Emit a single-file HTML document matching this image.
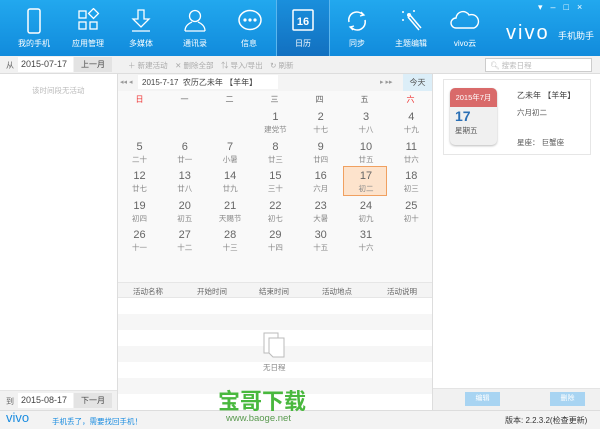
<!DOCTYPE html>
<html><head><meta charset="utf-8"><style>
*{margin:0;padding:0;box-sizing:border-box}
body{width:600px;height:429px;overflow:hidden;background:#fff;font-family:"Liberation Sans","Noto Sans CJK SC",sans-serif;position:relative;color:#555;font-size:8px}
.a{position:absolute}
#hd{left:0;top:0;width:600px;height:56px;background:linear-gradient(#22a8ee,#118bdc)}
.nv{position:absolute;top:0;height:56px;width:54px;text-align:center;color:#fff;font-size:8px}
.nv svg{position:absolute;left:15px;top:8px}
.nv span{position:absolute;left:0;right:0;top:38px}
.tb{background:#f1f1f1}
.cell{position:absolute;width:45px;height:29px;text-align:center;color:#666}
.cell b{display:block;font-weight:normal;font-size:11px;line-height:13px;margin-top:3px;color:#666}
.cell i{display:block;font-style:normal;font-size:7.5px;line-height:11px;color:#888}
.wk{position:absolute;top:94px;width:45px;text-align:center;font-size:8px;color:#666}
</style></head><body>
<div id="hd" class="a">
<div class="a" style="left:276px;top:0;width:54px;height:56px;background:linear-gradient(#1a8fdc,#1270c0);border-left:1px solid #5cb6ee;border-right:1px solid #5cb6ee"></div>
<div class="nv" style="left:7px"><svg width="24" height="26"><rect x="6" y="1" width="12" height="24" rx="2" fill="none" stroke="#fff" stroke-width="1.5"/></svg><span>我的手机</span></div>
<div class="nv" style="left:61px"><svg width="24" height="26"><rect x="3" y="3" width="7" height="7" fill="none" stroke="#fff" stroke-width="1.3"/><rect x="14" y="2" width="7" height="7" transform="rotate(45 17.5 5.5)" fill="none" stroke="#fff" stroke-width="1.3"/><rect x="3" y="14" width="7" height="7" fill="none" stroke="#fff" stroke-width="1.3"/><rect x="14" y="14" width="7" height="7" fill="none" stroke="#fff" stroke-width="1.3"/></svg><span>应用管理</span></div>
<div class="nv" style="left:114px"><svg width="24" height="26"><path d="M9 2h6v9h5l-8 8-8-8h5z" fill="none" stroke="#fff" stroke-width="1.3"/><path d="M3 23h18" stroke="#fff" stroke-width="1.3"/></svg><span>多媒体</span></div>
<div class="nv" style="left:168px"><svg width="24" height="26"><circle cx="12" cy="8" r="5.5" fill="none" stroke="#fff" stroke-width="1.3"/><path d="M2 23c0-6 5-8 7-9M22 23c0-6-5-8-7-9M2 23h20" fill="none" stroke="#fff" stroke-width="1.3"/></svg><span>通讯录</span></div>
<div class="nv" style="left:222px"><svg width="26" height="26"><ellipse cx="13" cy="12" rx="11" ry="9.5" fill="none" stroke="#fff" stroke-width="1.5"/><circle cx="8" cy="12" r="1.6" fill="#fff"/><circle cx="13" cy="12" r="1.6" fill="#fff"/><circle cx="18" cy="12" r="1.6" fill="#fff"/></svg><span>信息</span></div>
<div class="nv" style="left:276px"><svg width="24" height="26"><rect x="2" y="2" width="20" height="20" rx="1" fill="none" stroke="#fff" stroke-width="1.5"/><text x="12" y="17" font-size="11" fill="#fff" text-anchor="middle" font-family="Liberation Sans" font-weight="bold">16</text></svg><span>日历</span></div>
<div class="nv" style="left:330px"><svg width="24" height="26"><path d="M4 14a8 8 0 0 1 14-7M20 12a8 8 0 0 1-14 7" fill="none" stroke="#fff" stroke-width="1.5"/><path d="M16 4l3 3-4 1M8 22l-3-3 4-1" fill="none" stroke="#fff" stroke-width="1.3"/></svg><span>同步</span></div>
<div class="nv" style="left:384px"><svg width="26" height="26"><path d="M9 9l11 13M11 7l11 13" stroke="#fff" stroke-width="1.5"/><circle cx="10" cy="7" r="2" fill="#fff"/><circle cx="4" cy="4" r="1" fill="#fff"/><circle cx="15" cy="3" r="1" fill="#fff"/><circle cx="4" cy="12" r="1" fill="#fff"/></svg><span>主题编辑</span></div>
<div class="nv" style="left:438px"><svg width="30" height="26" style="left:12px"><path d="M6 20a5 5 0 0 1 0-10a7 7 0 0 1 13-3a6 6 0 0 1 5 13z" fill="none" stroke="#fff" stroke-width="1.4"/></svg><span>vivo云</span></div>
<div class="a" style="left:506px;top:22px;color:#fff;font-size:20px;letter-spacing:2px;font-weight:300">vivo</div>
<div class="a" style="left:558px;top:29px;color:#fff;font-size:9px">手机助手</div>
<div class="a" style="left:538px;top:2px;color:#fff;font-size:9px;letter-spacing:8px">▾–□×</div>
</div>
<div class="a tb" style="left:0;top:56px;width:600px;height:18px;border-bottom:1px solid #ddd"></div>
<div class="a" style="left:6px;top:60px;font-size:8px;color:#666">从</div>
<div class="a" style="left:18px;top:57px;width:55px;height:15px;background:#fff;font-size:9px;color:#444;padding:2px 3px">2015-07-17</div>
<div class="a" style="left:74px;top:57px;width:38px;height:15px;background:#e3e3e3;font-size:8px;text-align:center;line-height:15px;color:#444">上一月</div>
<div class="a" style="left:128px;top:60px;font-size:7.5px;color:#aaa">＋ 新建活动　✕ 删除全部　⇅ 导入/导出　↻ 刷新</div>
<div class="a" style="left:485px;top:58px;width:107px;height:14px;background:#fff;border:1px solid #ccc;font-size:7.5px;color:#bbb;padding:1px 4px">🔍︎ 搜索日程</div>
<div class="a" style="left:117px;top:74px;width:1px;height:336px;background:#ddd"></div>
<div class="a" style="left:32px;top:85px;font-size:7.5px;color:#bbb">该时间段无活动</div>
<div class="a tb" style="left:0;top:390px;width:117px;height:20px;border-top:1px solid #e4e4e4"></div>
<div class="a" style="left:6px;top:396px;font-size:8px;color:#666">到</div>
<div class="a" style="left:18px;top:393px;width:55px;height:15px;background:#fff;font-size:9px;color:#444;padding:2px 3px">2015-08-17</div>
<div class="a" style="left:74px;top:393px;width:38px;height:15px;background:#e3e3e3;font-size:8px;text-align:center;line-height:15px;color:#444">下一月</div>
<div class="a" style="left:118px;top:74px;width:314px;height:17px;background:#f4f4f4"></div>
<div class="a" style="left:120px;top:78px;font-size:7px;color:#999">◂◂ ◂</div>
<div class="a" style="left:138px;top:75px;width:140px;height:14px;background:#fff;font-size:8px;color:#444;padding:2px 4px">2015-7-17 &nbsp;农历乙未年 【羊年】</div>
<div class="a" style="left:380px;top:78px;font-size:7px;color:#999">▸ ▸▸</div>
<div class="a" style="left:403px;top:74px;width:29px;height:17px;background:#dceef8;font-size:8px;text-align:center;line-height:17px;color:#555">今天</div>
<div class="a" style="left:118px;top:91px;width:314px;height:191px;background:#f9f9f9"></div>
<div class="wk" style="left:117px;color:#e33">日</div><div class="wk" style="left:162px">一</div><div class="wk" style="left:207px">二</div><div class="wk" style="left:252px">三</div><div class="wk" style="left:297px">四</div><div class="wk" style="left:342px">五</div><div class="wk" style="left:388px;color:#e33">六</div>
<div class="a" style="left:343px;top:166px;width:44px;height:30px;background:#fde3cc;border:1px solid #f0a060"></div>
<div id="g"></div>
<div class="a" style="left:118px;top:282px;width:314px;height:16px;background:#f4f4f4;border-top:1px solid #e6e6e6;border-bottom:1px solid #e6e6e6"></div>
<div class="a" style="left:133px;top:286px;font-size:7.5px;color:#666">活动名称</div>
<div class="a" style="left:197px;top:286px;font-size:7.5px;color:#666">开始时间</div>
<div class="a" style="left:259px;top:286px;font-size:7.5px;color:#666">结束时间</div>
<div class="a" style="left:322px;top:286px;font-size:7.5px;color:#666">活动地点</div>
<div class="a" style="left:387px;top:286px;font-size:7.5px;color:#666">活动说明</div>
<div class="a" style="left:118px;top:314px;width:314px;height:16px;background:#f6f6f6"></div>
<div class="a" style="left:118px;top:346px;width:314px;height:16px;background:#f6f6f6"></div>
<div class="a" style="left:118px;top:378px;width:314px;height:16px;background:#f6f6f6"></div>
<svg class="a" style="left:262px;top:331px" width="26" height="30"><rect x="2" y="2" width="14" height="20" fill="#fff" stroke="#bbb"/><path d="M7 7h15v19h-11l-4-4z" fill="#fff" stroke="#bbb"/></svg>
<div class="a" style="left:263px;top:362px;font-size:7.5px;color:#888">无日程</div>
<div class="a" style="left:432px;top:74px;width:1px;height:336px;background:#ddd"></div>
<div class="a" style="left:443px;top:79px;width:148px;height:76px;border:1px solid #e6e6e6;background:#fff"></div>
<div class="a" style="left:450px;top:88px;width:47px;height:57px;border-radius:5px;background:#f0f0f0;box-shadow:0 1px 2px #bbb;overflow:hidden">
<div style="height:19px;background:#d96a6a;color:#fff;font-size:7.5px;text-align:center;line-height:19px">2015年7月</div>
<div style="color:#2a6fb5;font-size:14px;font-weight:bold;padding-left:5px;line-height:18px">17</div>
<div style="font-size:7.5px;color:#555;padding-left:5px">星期五</div></div>
<div class="a" style="left:517px;top:90px;font-size:8px;color:#444">乙未年 【羊年】</div>
<div class="a" style="left:517px;top:107px;font-size:7.5px;color:#555">六月初二</div>
<div class="a" style="left:517px;top:137px;font-size:7.5px;color:#555">星座： 巨蟹座</div>
<div class="a tb" style="left:433px;top:388px;width:167px;height:22px;border-top:1px solid #e4e4e4"></div>
<div class="a" style="left:465px;top:392px;width:35px;height:14px;background:#a8d4f2;color:#fff;font-size:7px;text-align:center;line-height:14px">编辑</div>
<div class="a" style="left:550px;top:392px;width:35px;height:14px;background:#a8d4f2;color:#fff;font-size:7px;text-align:center;line-height:14px">删除</div>
<div class="a" style="left:0;top:410px;width:600px;height:19px;background:#f3f3f3;border-top:1px solid #ddd"></div>
<div class="a" style="left:6px;top:410px;font-size:13px;color:#1a8ce0">vivo</div>
<div class="a" style="left:52px;top:416px;font-size:7.5px;color:#1a8ce0">手机丢了，需要找回手机！</div>
<div class="a" style="left:505px;top:415px;font-size:8px;color:#333">版本: 2.2.3.2(检查更新)</div>
<div class="a" style="left:218px;top:384px;font-size:22px;font-weight:bold;color:#49b83e;letter-spacing:0">宝哥下载</div>
<div class="a" style="left:226px;top:413px;font-size:9.5px;color:#5a9a50">www.baoge.net</div>
<script>
var g=document.getElementById('g'),h='';
var lun={1:'建党节',2:'十七',3:'十八',4:'十九',5:'二十',6:'廿一',7:'小暑',8:'廿三',9:'廿四',10:'廿五',11:'廿六',12:'廿七',13:'廿八',14:'廿九',15:'三十',16:'六月',17:'初二',18:'初三',19:'初四',20:'初五',21:'天赐节',22:'初七',23:'大暑',24:'初九',25:'初十',26:'十一',27:'十二',28:'十三',29:'十四',30:'十五',31:'十六'};
for(var d=1;d<=31;d++){var p=d+2,c=p%7,r=Math.floor(p/7);
h+='<div class="cell" style="left:'+(117+c*45.3)+'px;top:'+(108+r*29.5)+'px"><b>'+d+'</b><i>'+lun[d]+'</i></div>';}
g.innerHTML=h;
</script>
</body></html>
